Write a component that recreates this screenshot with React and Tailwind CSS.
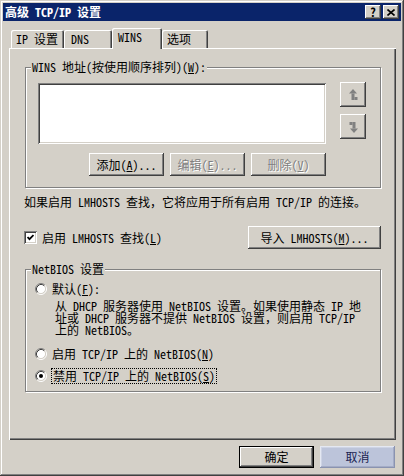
const RAISED =
  "bg-[#d4d0c8] shadow-[inset_-1px_-1px_#404040,inset_1px_1px_#fff,inset_-2px_-2px_#808080,inset_2px_2px_#d4d0c8]";
const SUNKEN =
  "shadow-[inset_1px_1px_#808080,inset_-1px_-1px_#fff,inset_2px_2px_#404040,inset_-2px_-2px_#d4d0c8]";
const DIM = "text-[#808080] [text-shadow:1px_1px_0_#fff]";

function Btn({ children, className = "", disabled }) {
  return (
    <button
      type="button"
      className={`flex items-center justify-center leading-[12px] whitespace-nowrap ${RAISED} ${
        disabled ? DIM : "text-black"
      } ${className}`}
    >
      {children}
    </button>
  );
}

function Group({ title, className = "", children }) {
  return (
    <div className={`relative border border-[#808080] shadow-[inset_1px_1px_#fff,1px_1px_#fff] ${className}`}>
      <span className="absolute left-[5px] -top-[7px] bg-[#d4d0c8] px-px leading-[12px] whitespace-nowrap">
        {title}
      </span>
      {children}
    </div>
  );
}

function Arrow({ down }) {
  return (
    <svg width="9" height="12" viewBox="0 0 9 12" className={down ? "rotate-180" : ""}>
      <polygon points="4,0 8,4.5 0,4.5" fill="#808080" />
      <rect x="2.5" y="4.5" width="3" height="6.5" fill="#808080" />
      <rect x="5.5" y="8" width="3" height="3" fill="#808080" />
    </svg>
  );
}

function Radio({ checked }) {
  return (
    <svg width="12" height="12" viewBox="0 0 12 12" className="shrink-0">
      <circle cx="6" cy="6" r="4.5" fill="#fff" />
      <path d="M2.11 9.89 A5.5 5.5 0 0 1 9.89 2.11" fill="none" stroke="#808080" />
      <path d="M9.89 2.11 A5.5 5.5 0 0 1 2.11 9.89" fill="none" stroke="#fff" />
      <path d="M2.82 9.18 A4.5 4.5 0 0 1 9.18 2.82" fill="none" stroke="#404040" />
      <path d="M9.18 2.82 A4.5 4.5 0 0 1 2.82 9.18" fill="none" stroke="#d4d0c8" />
      {checked && <circle cx="6" cy="6" r="2" fill="#000" />}
    </svg>
  );
}

function Tab({ children, selected, className = "" }) {
  return (
    <div
      className={`flex items-center rounded-t-[2px] bg-[#d4d0c8] whitespace-nowrap shadow-[inset_1px_1px_#fff,inset_-1px_0_#404040,inset_-2px_0_#808080] ${
        selected ? "relative z-10 h-[21px] -mb-px pb-[3px]" : "h-[18px]"
      } ${className}`}
    >
      {children}
    </div>
  );
}

export default function App() {
  return (
    <div className="w-[404px] h-[476px] overflow-hidden bg-[#d4d0c8] p-[3px] flex flex-col text-black text-[12px] leading-[12px] font-['Noto_Sans_Mono_CJK_SC','Noto_Sans_CJK_SC','DejaVu_Sans_Mono',monospace] shadow-[inset_-1px_-1px_#404040,inset_1px_1px_#d4d0c8,inset_-2px_-2px_#808080,inset_2px_2px_#fff]">
      {/* Title bar */}
      <div className="flex items-center h-[18px] bg-[#0a246a] px-[2px]">
        <span className="font-bold text-white whitespace-nowrap">高级 TCP/IP 设置</span>
        <div className="ml-auto flex gap-[2px]">
          <Btn className="w-[16px] h-[14px] font-bold">?</Btn>
          <Btn className="w-[16px] h-[14px]">
            <svg width="8" height="7" viewBox="0 0 8 7">
              <path d="M0.5 0.5 L7.5 6.5 M7.5 0.5 L0.5 6.5" stroke="#000" strokeWidth="1.6" />
            </svg>
          </Btn>
        </div>
      </div>

      <div className="ml-[6px] mt-[7px] w-[387px] flex flex-col">
        {/* Tabs */}
        <div className="flex items-end h-[20px] pl-[2px]">
          <Tab className="w-[53px] pl-[5px]">IP 设置</Tab>
          <Tab className="w-[48px] pl-[7px]">DNS</Tab>
          <Tab selected className="w-[50px] pl-[6px]">WINS</Tab>
          <Tab className="w-[46px] pl-[5px]">选项</Tab>
        </div>

        {/* Tab panel */}
        <div className="h-[392px] pt-[19px] pl-[16px] flex flex-col shadow-[inset_1px_1px_#fff,inset_-1px_-1px_#404040,inset_-2px_-2px_#808080]">
          <Group
            title={<>WINS 地址(按使用顺序排列)(<u>W</u>):</>}
            className="w-[356px] h-[121px] pl-[12px] pt-[15px] flex"
          >
            <div className="flex flex-col">
              <div className={`w-[288px] h-[61px] bg-white ${SUNKEN}`} />
              <div className="flex justify-end gap-[6px] mt-[9px]">
                <Btn className="w-[75px] h-[23px]">添加(<u>A</u>)...</Btn>
                <Btn disabled className="w-[75px] h-[23px]">编辑(<u>E</u>)...</Btn>
                <Btn disabled className="w-[75px] h-[23px]">删除(<u>V</u>)</Btn>
              </div>
            </div>
            <div className="flex flex-col gap-[7px] ml-[14px] -mt-px">
              <Btn className="w-[26px] h-[25px]"><Arrow /></Btn>
              <Btn className="w-[26px] h-[25px]"><Arrow down /></Btn>
            </div>
          </Group>

          <p className="mt-[8px] -ml-px whitespace-nowrap">
            如果启用 LMHOSTS 查找，它将应用于所有启用 TCP/IP 的连接。
          </p>

          <div className="flex items-center justify-between w-[356px] h-[23px] mt-[18px]">
            <div className="flex items-center gap-[5px] -ml-px">
              <div className={`w-[13px] h-[13px] bg-white flex items-center justify-center ${SUNKEN}`}>
                <svg width="7" height="7" viewBox="0 0 7 7">
                  <polyline points="0.5,3 2.5,5.2 6.5,1" fill="none" stroke="#000" strokeWidth="1.8" />
                </svg>
              </div>
              <span className="whitespace-nowrap">启用 LMHOSTS 查找(<u>L</u>)</span>
            </div>
            <Btn className="w-[133px] h-[23px]">导入 LMHOSTS(<u>M</u>)...</Btn>
          </div>

          <Group title="NetBIOS 设置" className="w-[356px] h-[123px] mt-[20px] pl-[9px] pt-[12px] flex flex-col">
            <div className="flex items-center gap-[5px] h-[13px]">
              <Radio />
              <span className="whitespace-nowrap">默认(<u>F</u>):</span>
            </div>
            <div className="ml-[20px] mt-[5px] whitespace-nowrap">
              从 DHCP 服务器使用 NetBIOS 设置。如果使用静态 IP 地
              <br />
              址或 DHCP 服务器不提供 NetBIOS 设置，则启用 TCP/IP
              <br />
              上的 NetBIOS。
            </div>
            <div className="flex items-center gap-[5px] h-[13px] mt-[11px]">
              <Radio />
              <span className="whitespace-nowrap">启用 TCP/IP 上的 NetBIOS(<u>N</u>)</span>
            </div>
            <div className="flex items-center gap-[4px] h-[13px] mt-[9px]">
              <Radio checked />
              <span className="whitespace-nowrap border border-dotted border-black px-px py-[1px]">
                禁用 TCP/IP 上的 NetBIOS(<u>S</u>)
              </span>
            </div>
          </Group>
        </div>

        {/* Dialog buttons */}
        <div className="flex justify-end gap-[6px] mt-[6px] pr-px">
          <button
            type="button"
            className="flex items-center justify-center w-[75px] h-[22px] bg-[#d4d0c8] shadow-[inset_0_0_0_1px_#000,inset_-2px_-2px_#404040,inset_2px_2px_#fff,inset_-3px_-3px_#808080]"
          >
            确定
          </button>
          <button
            type="button"
            className="flex items-center justify-center w-[75px] h-[22px] bg-[#bcc4da] text-[#1a2250] shadow-[inset_-1px_-1px_#8a93b0,inset_1px_1px_#e4e8f2,inset_-2px_-2px_#a4acc6,inset_2px_2px_#cdd3e4]"
          >
            取消
          </button>
        </div>
      </div>
    </div>
  );
}
